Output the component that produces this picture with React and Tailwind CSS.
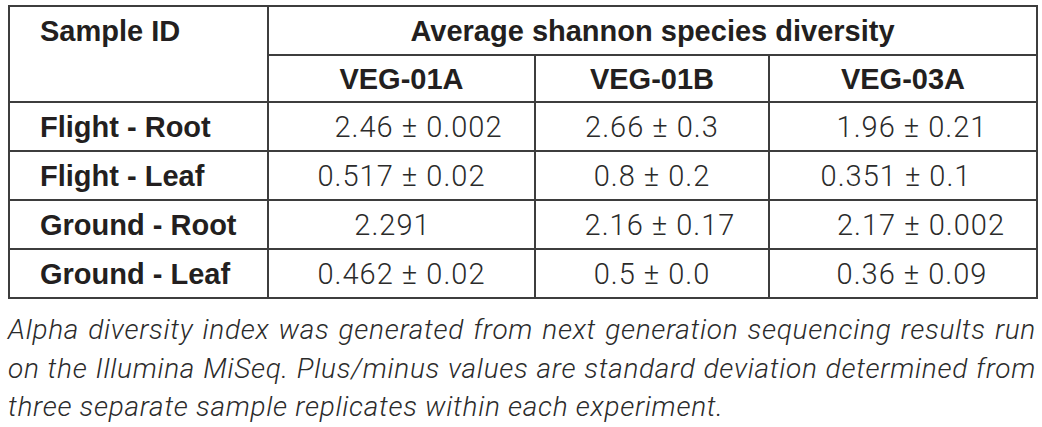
import React from "react";

const rows = [
  {
    label: "Flight - Root",
    values: [
      { text: "2.46 ± 0.002", shift: "pl-[34px]" },
      { text: "2.66 ± 0.3", shift: "" },
      { text: "1.96 ± 0.21", shift: "pl-[18px]" },
    ],
  },
  {
    label: "Flight - Leaf",
    values: [
      { text: "0.517 ± 0.02", shift: "" },
      { text: "0.8 ± 0.2", shift: "" },
      { text: "0.351 ± 0.1", shift: "pr-[14px]" },
    ],
  },
  {
    label: "Ground - Root",
    values: [
      { text: "2.291", shift: "pr-[18px]" },
      { text: "2.16 ± 0.17", shift: "pl-[16px]" },
      { text: "2.17 ± 0.002", shift: "pl-[36px]" },
    ],
  },
  {
    label: "Ground - Leaf",
    values: [
      { text: "0.462 ± 0.02", shift: "" },
      { text: "0.5 ± 0.0", shift: "" },
      { text: "0.36 ± 0.09", shift: "pl-[18px]" },
    ],
  },
];

const cell = "border-2 border-[#3d3d3d] p-0";

const App = () => {
  return (
    <div className="w-[1042px] h-[427px] bg-white overflow-hidden pt-[5px] pl-[8px] text-[#231f20] font-['Liberation_Sans',Arial,sans-serif]">
      <table className="w-[1028px] table-fixed border-collapse text-[29px] leading-[34px]">
        <colgroup>
          <col className="w-[259px]" />
          <col className="w-[267px]" />
          <col className="w-[234px]" />
          <col className="w-[268px]" />
        </colgroup>
        <thead>
          <tr className="h-[49px]">
            <th rowSpan={2} className={`${cell} align-top text-left font-bold pl-[30px] pt-[7px]`}>
              Sample ID
            </th>
            <th colSpan={3} className={`${cell} text-center font-bold`}>
              Average shannon species diversity
            </th>
          </tr>
          <tr className="h-[47px]">
            <th className={`${cell} text-center font-bold`}>VEG-01A</th>
            <th className={`${cell} text-center font-bold`}>VEG-01B</th>
            <th className={`${cell} text-center font-bold`}>VEG-03A</th>
          </tr>
        </thead>
        <tbody>
          {rows.map((row) => (
            <tr key={row.label} className="h-[49px]">
              <td className={`${cell} text-left font-bold pl-[30px]`}>{row.label}</td>
              {row.values.map((v, i) => (
                <td
                  key={i}
                  className={`${cell} text-center font-['Roboto',sans-serif] font-light tracking-[1px] text-[#2b2b2b] ${v.shift}`}
                >
                  {v.text}
                </td>
              ))}
            </tr>
          ))}
        </tbody>
      </table>
      <div className="mt-[12px] w-[1028px] italic text-[28px] leading-[38.5px] tracking-[0.7px] text-[#2b2b2b] font-['Roboto',sans-serif] font-light">
        <div className="text-justify [text-align-last:justify]">
          Alpha diversity index was generated from next generation sequencing results run
        </div>
        <div className="text-justify [text-align-last:justify]">
          on the Illumina MiSeq. Plus/minus values are standard deviation determined from
        </div>
        <div>three separate sample replicates within each experiment.</div>
      </div>
    </div>
  );
};

export default App;
